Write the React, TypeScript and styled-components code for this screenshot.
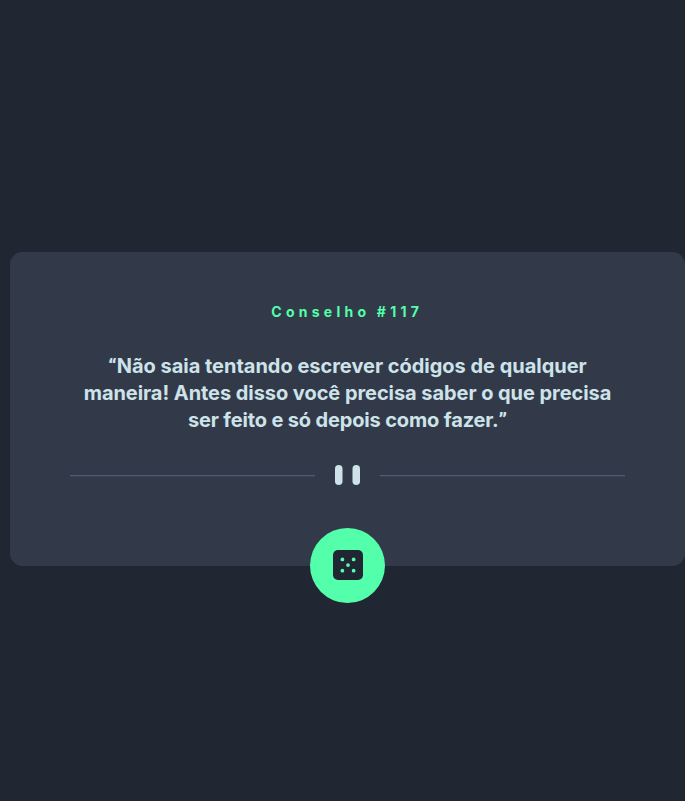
import React from "react";
import styled, { createGlobalStyle } from "styled-components";

const GlobalStyle = createGlobalStyle`
  * { box-sizing: border-box; margin: 0; padding: 0; }
  body { background: #202632; font-family: Inter, "Open Sans", sans-serif; }
`;

const Page = styled.main`
  height: 100vh;
  display: flex;
  align-items: center;
  padding: 17px 0 0 10px;
`;

const Card = styled.section`
  width: 675px;
  height: 314px;
  display: flex;
  flex-direction: column;
  align-items: center;
  border-radius: 12.5px;
  background: #323a49;
  padding-top: 50px;
`;

const Title = styled.h1`
  height: 20px;
  font-size: 14px;
  line-height: 20px;
  font-weight: 700;
  letter-spacing: 4.25px;
  word-spacing: -1px;
  padding-right: 0.5px;
  color: #53ffaa;
`;

const Quote = styled.blockquote`
  height: 81px;
  margin-top: 31px;
  color: #cee3e9;
  text-align: center;
`;

const Line = styled.span<{ $spacing: number }>`
  display: block;
  font-size: 20px;
  line-height: 27px;
  font-weight: 700;
  white-space: nowrap;
  letter-spacing: ${({ $spacing }) => $spacing}px;
`;

const Mark = styled.span`
  font-family: Roboto, sans-serif;
  font-weight: 900;
  line-height: 1;
`;

const Divider = styled.svg`
  display: block;
  flex: none;
  margin-top: 31px;
`;

const DiceButton = styled.button`
  flex: none;
  width: 75px;
  height: 75px;
  margin-top: 43.4px;
  display: flex;
  align-items: center;
  justify-content: center;
  padding-bottom: 1px;
  border: 0;
  border-radius: 50%;
  background: #53ffaa;
  cursor: pointer;
`;

const quoteLines = [
  { open: "“", text: "Não saia tentando escrever códigos de qualquer", close: "", spacing: -0.02 },
  { open: "", text: "maneira! Antes disso você precisa saber o que precisa", close: "", spacing: -0.06 },
  { open: "", text: "ser feito e só depois como fazer.", close: "”", spacing: -0.15 },
];

const dots = [[7.5, 7.5], [16.5, 7.5], [12, 12], [7.5, 16.5], [16.5, 16.5]];

export default function App() {
  return (
    <>
      <GlobalStyle />
      <Page>
        <Card>
          <Title>Conselho #117</Title>
          <Quote>
            {quoteLines.map(({ open, text, close, spacing }) => (
              <Line key={text} $spacing={spacing}>
                {open && <Mark>{open}</Mark>}
                {text}
                {close && <Mark>{close}</Mark>}
              </Line>
            ))}
          </Quote>
          <Divider width="555" height="20" viewBox="0 0 444 16" aria-hidden="true">
            <path fill="#4f5d74" d="M0 8h196v1H0zM248 8h196v1H248z" />
            <g transform="translate(212)" fill="#cee3e9">
              <rect width="6" height="16" rx="3" />
              <rect x="14" width="6" height="16" rx="3" />
            </g>
          </Divider>
          <DiceButton aria-label="Novo conselho">
            <svg width="30" height="30" viewBox="0 0 24 24" aria-hidden="true">
              <rect width="24" height="24" rx="4" fill="#202733" />
              {dots.map(([x, y]) => (
                <circle key={`${x}-${y}`} cx={x} cy={y} r="1.5" fill="#53ffaa" />
              ))}
            </svg>
          </DiceButton>
        </Card>
      </Page>
    </>
  );
}
